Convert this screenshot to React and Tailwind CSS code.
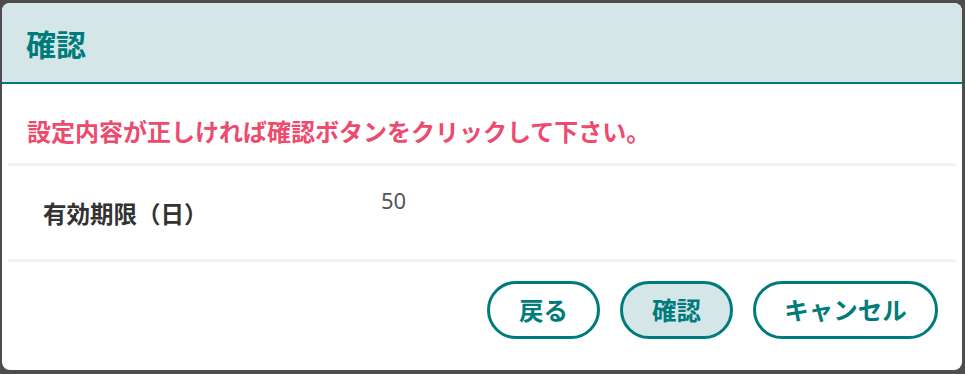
export default function App() {
  const jp = "font-['Noto_Sans_CJK_JP','Noto_Sans',sans-serif]";
  const btn =
    "h-[58px] rounded-full border-[3px] border-[#007b7b] text-[24.5px] font-bold leading-none text-[#007b7b] flex items-center justify-center";

  return (
    <div className={`h-[374px] w-[965px] bg-[#4d4d4d] pt-[3px] pl-[2px] ${jp}`}>
      <div className="flex h-[367px] w-[960px] flex-col overflow-hidden rounded-lg bg-white">
        {/* header */}
        <div className="flex h-[81px] shrink-0 items-center border-b-2 border-[#007b7b] bg-[#d4e6e8] pl-[24px]">
          <h2 className="text-[30px] font-bold leading-none text-[#007b7b]">確認</h2>
        </div>

        {/* message */}
        <div className="flex h-[79px] items-center px-[25px] pt-[14px]">
          <p className="text-[24px] font-bold leading-none text-[#ee4a6d]">
            設定内容が正しければ確認ボタンをクリックして下さい。
          </p>
        </div>

        <div className="mx-[6px] h-[3px] bg-[#f2f2f2]" />

        {/* row */}
        <div className="mx-[6px] flex h-[93px]">
          <div className="flex w-[373px] items-center pt-[3px] pl-[35px] text-[23.5px] font-bold text-[#333]">
            有効期限（日）
          </div>
          <div className="pt-[23px] font-['Noto_Sans',sans-serif] text-[22px] leading-none text-[#555]">
            50
          </div>
        </div>

        <div className="mx-[6px] h-[3px] bg-[#f2f2f2]" />

        {/* footer */}
        <div className="flex flex-1 items-start justify-end gap-5 pt-[19px] pr-[24px]">
          <button className={`${btn} w-[113px] bg-white`}>戻る</button>
          <button className={`${btn} w-[113px] bg-[#d4e6e8]`}>確認</button>
          <button className={`${btn} w-[185px] bg-white`}>キャンセル</button>
        </div>
      </div>
    </div>
  );
}
